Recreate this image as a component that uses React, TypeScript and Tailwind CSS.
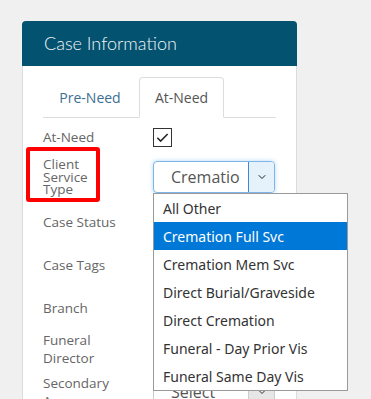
import { ChevronDown } from "lucide-react"

const options = [
    "All Other",
    "Cremation Full Svc",
    "Cremation Mem Svc",
    "Direct Burial/Graveside",
    "Direct Cremation",
    "Funeral - Day Prior Vis",
    "Funeral Same Day Vis",
]

// select box that sits under the open list; only the last one shows its text
const PlainSelect = ({ text = "" }: { text?: string }) => (
    <div className="w-[122px] h-[32px] flex border border-[#ccc] rounded-[4px] bg-white overflow-hidden">
        <div className="flex-1 flex items-center pl-[17px] text-[16px] text-[#555]">{text}</div>
        <div className="w-[26px] flex items-center justify-center bg-[#e6e6e6] border-l border-[#ccc]">
            <ChevronDown className="w-3 h-3 text-[#333]" strokeWidth={2} />
        </div>
    </div>
)

const Row = ({ label, height, children }: { label: React.ReactNode; height: string; children?: React.ReactNode }) => (
    <div className={`flex items-center ${height}`}>
        <div className="w-[110px] text-[13.5px] text-[#666]">{label}</div>
        <div className="relative">{children}</div>
    </div>
)

const App = () => {
    return (
        <main className="h-[399px] overflow-hidden bg-[#f0f0f0] pt-[21px] pl-[22px] font-['Open_Sans',sans-serif]">
            <div className="relative w-[275px] h-[420px] bg-white border-x border-[#dcdcdc] rounded-t-[4px]">
                {/* Header */}
                <div className="h-[45px] -mx-px bg-[#03526f] rounded-t-[4px] flex items-center pl-[22px] text-[18px] font-light text-[#f2f6f8] font-['Lato',sans-serif]">
                    Case Information
                </div>

                <div className="px-[20px] pt-[11px]">
                    {/* Tabs */}
                    <div className="flex h-[41px] border-b border-[#ddd]">
                        <div className="w-[94px] mr-[2px] flex items-center justify-center text-[14px] text-[#3d6f92]">Pre-Need</div>
                        <div className="w-[85px] -mb-px flex items-center justify-center text-[14px] text-[#555] bg-white border border-[#ddd] border-b-white rounded-t-[4px]">At-Need</div>
                    </div>

                    {/* Fields */}
                    <div className="mt-[4px]">
                        <Row label="At-Need" height="h-[30px]">
                            <div className="w-[19px] h-[19px] border border-[#333] flex items-center justify-center">
                                <svg viewBox="0 0 16 16" className="w-[15px] h-[15px]">
                                    <path d="M2.5 8.2 L6 11.8 L13.5 4.2" fill="none" stroke="#222" strokeWidth="1.6" />
                                </svg>
                            </div>
                        </Row>

                        <Row
                            height="h-[50px]"
                            label={<div className="leading-[12.5px]">Client<br />Service<br />Type</div>}
                        >
                            <div className="w-[122px] h-[32px] flex border border-[#7fb6e8] rounded-[4px] bg-white overflow-hidden shadow-[0_0_4px_rgba(102,175,233,0.5)]">
                                <div className="flex-1 flex items-center pl-[17px] text-[16px] text-[#555] overflow-hidden whitespace-nowrap">Crematio</div>
                                <div className="w-[26px] flex items-center justify-center bg-[#e5f1fb] border-l border-[#3b8ad6]">
                                    <ChevronDown className="w-3 h-3 text-[#222]" strokeWidth={2} />
                                </div>
                            </div>

                            {/* Open dropdown list */}
                            <ul className="absolute z-10 left-0 top-full w-[195px] bg-white border border-[#9a9a9a] font-['Noto_Sans',sans-serif] text-[14px] text-[#333]">
                                {options.map((opt, idx) => (
                                    <li
                                        key={opt}
                                        className={`h-[28px] flex items-center pl-[9px] whitespace-nowrap ${idx === 1 ? "bg-[#0078d7] text-white" : ""}`}
                                    >
                                        {opt}
                                    </li>
                                ))}
                            </ul>
                        </Row>

                        <Row label="Case Status" height="h-[41px]"><PlainSelect /></Row>
                        <Row label="Case Tags" height="h-[44px]"><PlainSelect /></Row>
                        <Row label="Branch" height="h-[43px]"><PlainSelect /></Row>
                        <Row label={<div className="leading-[18px]">Funeral<br />Director</div>} height="h-[38px]"><PlainSelect /></Row>
                        <Row label={<div className="leading-[18px]">Secondary<br />Arranger</div>} height="h-[48px]"><PlainSelect text="Select" /></Row>
                    </div>
                </div>

                {/* Highlight annotation */}
                <div className="absolute left-[3px] top-[126px] w-[74px] h-[55px] border-4 border-[#ff0000] rounded-[3px]" />
            </div>
        </main>
    )
}

export default App
